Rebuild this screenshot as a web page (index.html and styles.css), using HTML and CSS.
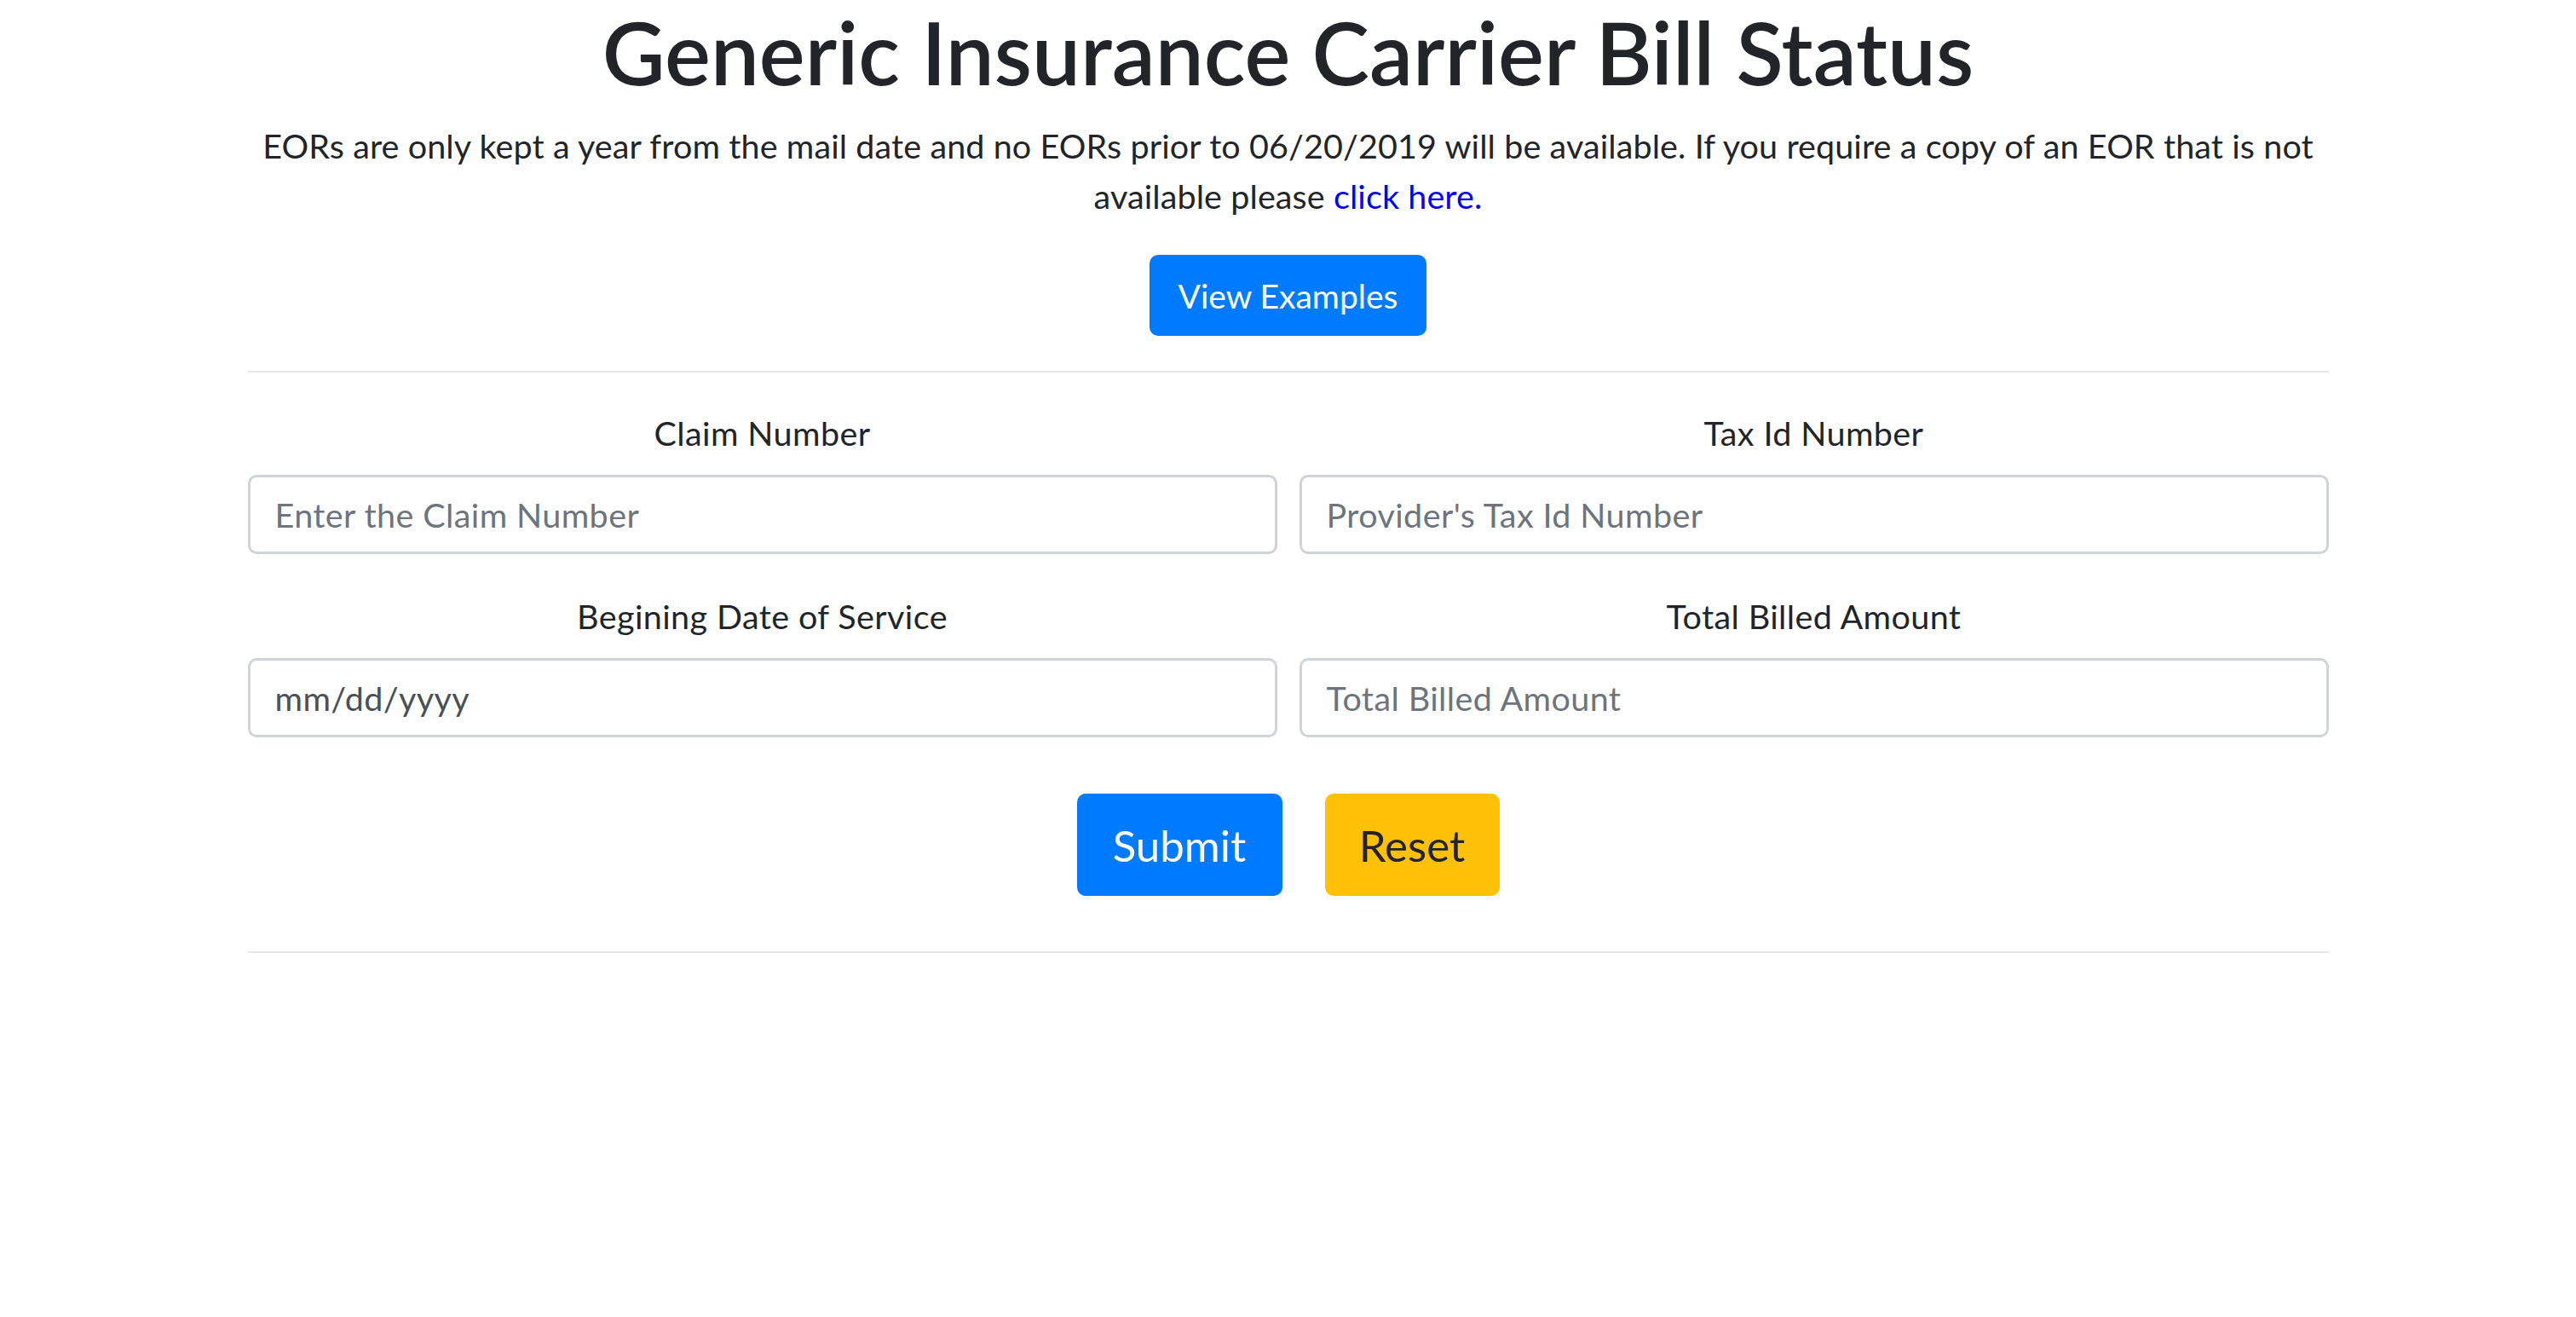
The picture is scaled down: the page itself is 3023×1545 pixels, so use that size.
FILE: index.html
```html
<!DOCTYPE html>
<html lang="en">
<head>
<meta charset="utf-8">
<title>Generic Insurance Carrier Bill Status</title>
<link rel="stylesheet" href="styles.css">
</head>
<body>
<main class="container">
  <h1 class="title">Generic Insurance Carrier Bill Status</h1>
  <p class="intro">EORs are only kept a year from the mail date and no EORs prior to 06/20/2019 will be available. If you require a copy of an EOR that is not available please <a class="link" href="#">click here.</a></p>
  <div class="center">
    <button type="button" class="btn btn-primary btn-examples">View Examples</button>
  </div>
  <hr class="rule">
  <form class="form">
    <div class="grid">
      <div class="field">
        <label class="label" for="claim">Claim Number</label>
        <input class="input" id="claim" type="text" placeholder="Enter the Claim Number">
      </div>
      <div class="field">
        <label class="label" for="tax">Tax Id Number</label>
        <input class="input" id="tax" type="text" placeholder="Provider's Tax Id Number">
      </div>
      <div class="field">
        <label class="label" for="dos">Begining Date of Service</label>
        <input class="input input-date" id="dos" type="text" placeholder="mm/dd/yyyy">
      </div>
      <div class="field">
        <label class="label" for="amt">Total Billed Amount</label>
        <input class="input" id="amt" type="text" placeholder="Total Billed Amount">
      </div>
    </div>
    <div class="actions">
      <button type="submit" class="btn btn-primary btn-lg btn-submit">Submit</button>
      <button type="reset" class="btn btn-warning btn-lg btn-reset">Reset</button>
    </div>
  </form>
  <hr class="rule rule-bottom">
</main>
</body>
</html>
```
FILE: styles.css
```css
html, body {
  margin: 0;
  padding: 0;
  background: #ffffff;
}

body {
  font-family: Lato, "Liberation Sans", sans-serif;
  color: #212529;
}

.container {
  width: 2442px;
  margin: 0 auto;
}

.title {
  margin: 0;
  padding-top: 4px;
  font-size: 101.5px;
  line-height: 115px;
  font-weight: 600;
  text-align: center;
  color: #212529;
}

.intro {
  margin: 22px 0 0;
  font-size: 39.5px;
  letter-spacing: 0.1px;
  line-height: 59px;
  text-align: center;
}

.link {
  color: #0000ff;
  text-decoration: none;
}

.center {
  display: flex;
  justify-content: center;
  margin-top: 40px;
}

.btn {
  display: inline-flex;
  align-items: center;
  justify-content: center;
  border: none;
  border-radius: 10px;
  font-family: inherit;
  padding: 0;
  cursor: pointer;
}

.btn-primary {
  background: #007bff;
  color: #ffffff;
}

.btn-warning {
  background: #ffc107;
  color: #212529;
}

.btn-examples {
  width: 325px;
  height: 95px;
  font-size: 39px;
}

.rule {
  border: none;
  height: 2px;
  background: #e6e6e6;
  margin: 41px 0 0;
}

.form {
  margin-top: 42px;
}

.grid {
  display: grid;
  grid-template-columns: 1fr 1fr;
  column-gap: 26px;
  row-gap: 44px;
}

.field {
  display: flex;
  flex-direction: column;
}

.label {
  font-size: 39.5px;
  letter-spacing: 0.4px;
  line-height: 58px;
  text-align: center;
  margin-bottom: 20px;
}

.input {
  box-sizing: border-box;
  height: 93px;
  width: 100%;
  border: 3px solid #ced4da;
  border-radius: 10px;
  padding: 0 29px;
  font-family: inherit;
  font-size: 39.5px;
  letter-spacing: 0.4px;
  color: #495057;
  background: #ffffff;
  outline: none;
}

.input::placeholder {
  color: #6c757d;
  opacity: 1;
}

.input-date::placeholder {
  color: #495057;
}

.actions {
  display: flex;
  justify-content: center;
  gap: 50px;
  margin-top: 66px;
}

.btn-lg {
  height: 120px;
  font-size: 51px;
}

.btn-submit {
  width: 241px;
}

.btn-reset {
  width: 205px;
}

.rule-bottom {
  margin-top: 65px;
}
```
